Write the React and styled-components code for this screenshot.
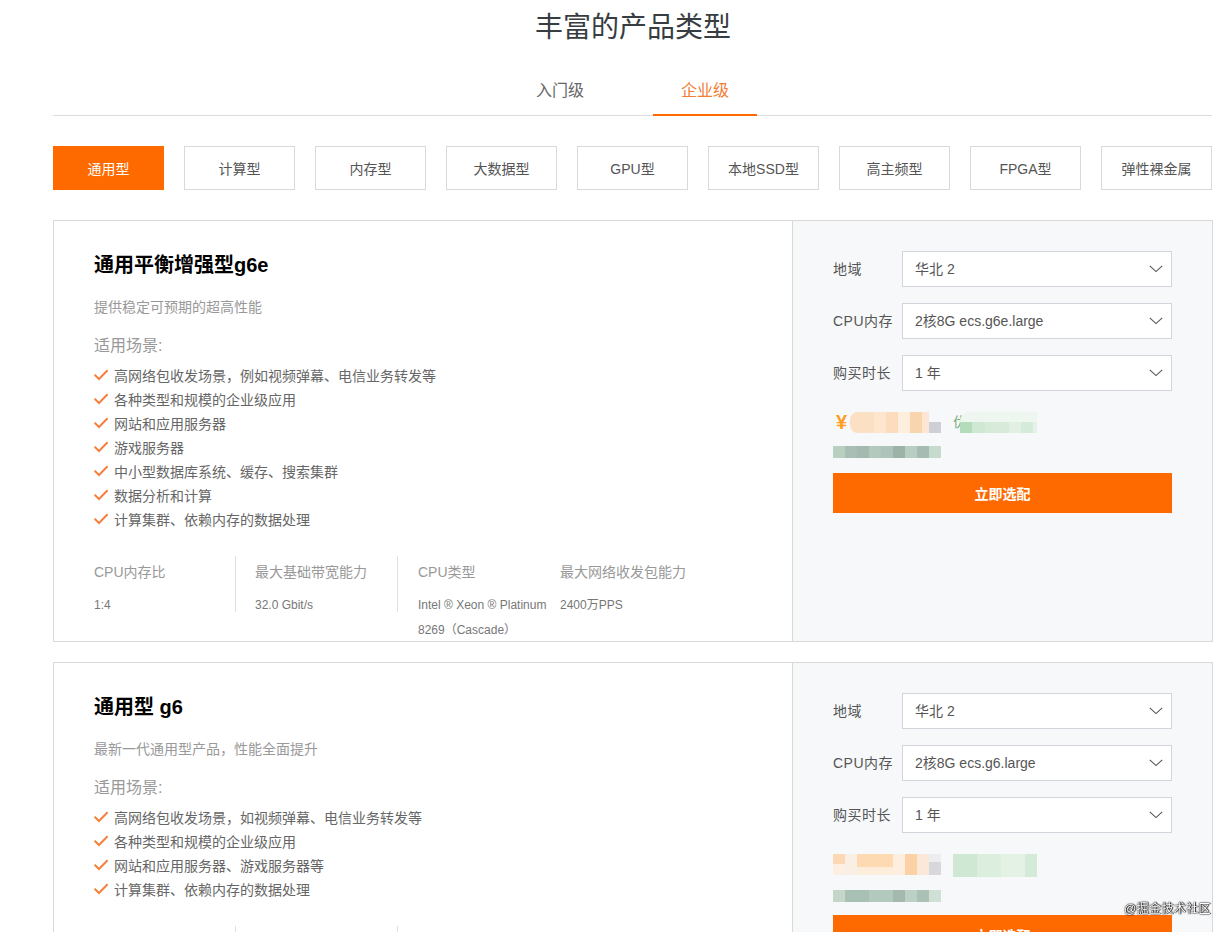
import styled, { createGlobalStyle } from "styled-components";

const GlobalStyle = createGlobalStyle`
  html, body {
    margin: 0;
    padding: 0;
    background: #ffffff;
    font-family: "Liberation Sans", "Noto Sans CJK SC", sans-serif;
    color: #333333;
  }
  html, body, #root {
    height: 932px;
    overflow: hidden;
  }
`;

const Page = styled.div`
  width: 1160px;
  margin-left: 53px;
`;

const Title = styled.h2`
  margin: 0;
  height: 54px;
  line-height: 56px;
  text-align: center;
  font-size: 28px;
  font-weight: 400;
  color: #373d41;
`;

const Tabs = styled.div`
  display: flex;
  justify-content: center;
  gap: 41px;
  height: 62px;
  box-sizing: border-box;
  border-bottom: 1px solid #dcdcdc;
  margin-right: 1px;
`;

const Tab = styled.div`
  width: 104px;
  height: 62px;
  box-sizing: border-box;
  padding-top: 25px;
  text-align: center;
  font-size: 16px;
  line-height: 24px;
  color: ${(p) => (p.$active ? "#f27d35" : "#666666")};
  border-bottom: 2px solid ${(p) => (p.$active ? "#ff6a00" : "transparent")};
`;

const Categories = styled.div`
  display: flex;
  gap: 20px;
  margin-top: 30px;
`;

const Category = styled.div`
  width: 111px;
  height: 44px;
  box-sizing: border-box;
  display: flex;
  align-items: center;
  justify-content: center;
  font-size: 14px;
  color: ${(p) => (p.$active ? "#ffffff" : "#555555")};
  background: ${(p) => (p.$active ? "#ff6a00" : "#ffffff")};
  border: 1px solid ${(p) => (p.$active ? "#ff6a00" : "#d9d9d9")};
`;

const Card = styled.section`
  display: flex;
  height: 422px;
  box-sizing: border-box;
  margin-top: ${(p) => (p.$first ? "30px" : "20px")};
  border: 1px solid #d9d9d9;
`;

const Info = styled.div`
  width: 738px;
  flex: none;
  box-sizing: border-box;
  padding: 30px 40px 0;
`;

const Name = styled.h3`
  margin: 0;
  font-size: 20px;
  line-height: 28px;
  font-weight: 700;
  color: #000000;
`;

const Desc = styled.p`
  margin: 14px 0 0;
  font-size: 14px;
  line-height: 28px;
  color: #999999;
`;

const SceneTitle = styled.div`
  margin-top: 13px;
  font-size: 16px;
  line-height: 24px;
  color: #999999;
`;

const SceneList = styled.ul`
  list-style: none;
  margin: 5px 0 0;
  padding: 0;
`;

const Scene = styled.li`
  display: flex;
  align-items: center;
  gap: 6px;
  height: 24px;
  font-size: 14px;
  color: #666666;
`;

const Stats = styled.div`
  display: grid;
  grid-template-columns: 142px 162px 162px auto;
  margin-top: 25px;
`;

const Stat = styled.div`
  box-sizing: border-box;
  height: 56px;
  padding-left: ${(p) => p.$pad}px;
  border-right: ${(p) => (p.$divider ? "1px solid #e0e0e0" : "none")};
`;

const StatLabel = styled.div`
  font-size: 14px;
  line-height: 32px;
  color: #999999;
`;

const StatValue = styled.div`
  margin-top: 5px;
  font-size: 12px;
  line-height: 24.5px;
  color: #777777;
`;

const Side = styled.aside`
  flex: 1;
  box-sizing: border-box;
  padding: 30px 40px 0;
  background: #f7f8fa;
  border-left: 1px solid #d9d9d9;
`;

const Field = styled.div`
  display: flex;
  align-items: center;
  justify-content: space-between;
  margin-bottom: 16px;
`;

const FieldLabel = styled.label`
  padding-bottom: 2px;
  font-size: 14px;
  letter-spacing: 0.5px;
  color: #555555;
`;

const Select = styled.div`
  display: flex;
  align-items: center;
  justify-content: space-between;
  width: 270px;
  height: 36px;
  box-sizing: border-box;
  padding: 0 8px 2px 12px;
  background: #ffffff;
  border: 1px solid #d4d4dc;
  font-size: 14px;
  color: #555555;
`;

const ChevronIcon = styled.svg`
  margin-top: 2px;
`;

const PriceRow = styled.div`
  display: flex;
  align-items: flex-end;
  height: 21px;
  margin-top: 21px;
`;

const Yen = styled.span`
  width: 17px;
  padding-left: 3px;
  box-sizing: border-box;
  margin-bottom: 1px;
  font-size: 20px;
  line-height: 20px;
  font-weight: 700;
  color: #ff9d1e;
`;

const Mosaic = styled.div`
  display: flex;
  flex: none;
  align-self: ${(p) => (p.$top ? "flex-start" : "auto")};
  margin-left: ${(p) => p.$gap || 0}px;
  padding-top: ${(p) => p.$lift || 0}px;
  background: ${(p) => p.$bg || "none"};
  border-radius: ${(p) => (p.$bg ? "9px 0 0 0" : "0")};
`;

const Cell = styled.span`
  display: block;
  width: ${(p) => p.$w}px;
  height: ${(p) => p.$h}px;
  background: ${(p) => p.$c};
  border-radius: ${(p) => p.$round || "0"};
`;

const GreenLetter = styled.span`
  width: 14px;
  margin-left: 12px;
  margin-bottom: 1px;
  font-size: 14px;
  line-height: 20px;
  color: #6fae7d;
`;

const DiscountRow = styled.div`
  height: ${(p) => 25 - p.$top}px;
  margin-top: ${(p) => p.$top}px;
`;

const SelectButton = styled.button`
  display: block;
  width: 339px;
  height: 40px;
  margin-top: 15px;
  padding: 0;
  border: none;
  background: #ff6a00;
  color: #ffffff;
  font-family: inherit;
  font-size: 14px;
  font-weight: 700;
`;

const Watermark = styled.div`
  position: fixed;
  right: 20px;
  top: 900px;
  font-size: 12px;
  line-height: 18px;
  letter-spacing: 0.4px;
  color: #ffffff;
  text-shadow: 0 0 1px #000000, 0 0 2px #000000, 1px 0 1px #333333;
`;

function Check() {
  return (
    <svg width="14" height="14" viewBox="0 0 14 14" fill="none">
      <path d="M0.6 6.6 L5 11 L13.6 2.2" stroke="#f5803e" strokeWidth="2" />
    </svg>
  );
}

function Chevron() {
  return (
    <ChevronIcon width="14" height="8" viewBox="0 0 14 8" fill="none">
      <path d="M0.8 0.8 L7 6.6 L13.2 0.8" stroke="#555555" strokeWidth="1.1" />
    </ChevronIcon>
  );
}

const ROW_A = [
  [12, "#fbe0c4"], [12, "#fde5ce"], [12, "#fbdcbc"], [12, "#fdeedd"], [12, "#f9d5ae"], [7, "#fde6d3"],
];
const ROW_GREEN = [
  [12, "#b4dcba"], [13, "#cfe8d3"], [24, "#d8ebdb"], [12, "#e2f0e4"], [12, "#d6ead9"], [4, "#e6f2e8"],
];
const ROW_GRAY_A = [
  [12, "#b9cfc0"], [12, "#a9bfb5"], [12, "#a4bab0"], [12, "#b3c9be"], [12, "#aec3b9"], [12, "#9db2a9"], [12, "#b9cec3"], [12, "#a6bcb2"], [12, "#c6dacd"],
];
const ROW_GRAY_B = [
  [12, "#c4d5c9"], [24, "#a9c0b4"], [24, "#b4c9be"], [12, "#a4baae"], [12, "#bdd0c5"], [12, "#abc1b5"], [12, "#cfe0d5"],
];
const ROW_B = [
  [12, "linear-gradient(#fcd9b4 50%, #fdf0e2 50%)"],
  [12, "#f9efe4"],
  [36, "linear-gradient(#fddab2 60%, #fdeedc 60%)"],
  [12, "#fdeee0"],
  [12, "#fad2a6"],
  [12, "#fce8d8"],
];
const ROW_B_GREEN = [
  [24, "#cfe8d3"], [24, "#dcefdf"], [24, "#e4f2e6"], [12, "#d5ebd9"],
];

function Cells({ cells, height }) {
  return cells.map(([w, c], i) => <Cell key={i} $w={w} $h={height} $c={c} />);
}

const PRODUCTS = [
  {
    name: "通用平衡增强型g6e",
    desc: "提供稳定可预期的超高性能",
    spec: "2核8G ecs.g6e.large",
    scenes: [
      "高网络包收发场景，例如视频弹幕、电信业务转发等",
      "各种类型和规模的企业级应用",
      "网站和应用服务器",
      "游戏服务器",
      "中小型数据库系统、缓存、搜索集群",
      "数据分析和计算",
      "计算集群、依赖内存的数据处理",
    ],
    stats: ["1:4", "32.0 Gbit/s", "Intel ® Xeon ® Platinum 8269（Cascade）", "2400万PPS"],
    price: (
      <PriceRow>
        <Yen>¥</Yen>
        <Mosaic>
          <Cell $w={12} $h={21} $c="#fbe0c4" $round="8px 0 0 8px" />
          <Cells cells={ROW_A} height={21} />
        </Mosaic>
        <Mosaic>
          <Cell $w={12} $h={11} $c="#cfcfd6" />
        </Mosaic>
        <GreenLetter>优</GreenLetter>
        <Mosaic $gap={-7} $lift={10} $bg="#eef6f0">
          <Cells cells={ROW_GREEN} height={11} />
        </Mosaic>
      </PriceRow>
    ),
    discount: <Mosaic><Cells cells={ROW_GRAY_A} height={12} /></Mosaic>,
    discountTop: 13,
  },
  {
    name: "通用型 g6",
    desc: "最新一代通用型产品，性能全面提升",
    spec: "2核8G ecs.g6.large",
    scenes: [
      "高网络包收发场景，如视频弹幕、电信业务转发等",
      "各种类型和规模的企业级应用",
      "网站和应用服务器、游戏服务器等",
      "计算集群、依赖内存的数据处理",
    ],
    price: (
      <PriceRow>
        <Mosaic><Cells cells={ROW_B} height={21} /></Mosaic>
        <Mosaic>
          <Cell $w={12} $h={21} $c="linear-gradient(#ededf0 40%, #d8d8dc 40%)" />
        </Mosaic>
        <Mosaic $gap={12} $top><Cells cells={ROW_B_GREEN} height={23} /></Mosaic>
      </PriceRow>
    ),
    discount: <Mosaic><Cells cells={ROW_GRAY_B} height={12} /></Mosaic>,
    discountTop: 15,
  },
];

// the second card is cut by the window before its labels show, only the dividers are seen
const STAT_LABELS = ["CPU内存比", "最大基础带宽能力", "CPU类型", "最大网络收发包能力"];
const STAT_PADS = [0, 19, 20, 0];
const CATEGORIES = ["通用型", "计算型", "内存型", "大数据型", "GPU型", "本地SSD型", "高主频型", "FPGA型", "弹性裸金属"];

function Product({ item, first }) {
  return (
    <Card $first={first}>
      <Info>
        <Name>{item.name}</Name>
        <Desc>{item.desc}</Desc>
        <SceneTitle>适用场景:</SceneTitle>
        <SceneList>
          {item.scenes.map((s) => (
            <Scene key={s}>
              <Check />
              {s}
            </Scene>
          ))}
        </SceneList>
        <Stats>
          {STAT_LABELS.map((label, i) => (
            <Stat key={label} $pad={STAT_PADS[i]} $divider={i < 2}>
              {item.stats && (
                <>
                  <StatLabel>{label}</StatLabel>
                  <StatValue>{item.stats[i]}</StatValue>
                </>
              )}
            </Stat>
          ))}
        </Stats>
      </Info>
      <Side>
        <Field>
          <FieldLabel>地域</FieldLabel>
          <Select>华北 2<Chevron /></Select>
        </Field>
        <Field>
          <FieldLabel>CPU内存</FieldLabel>
          <Select>{item.spec}<Chevron /></Select>
        </Field>
        <Field>
          <FieldLabel>购买时长</FieldLabel>
          <Select>1 年<Chevron /></Select>
        </Field>
        {item.price}
        <DiscountRow $top={item.discountTop}>{item.discount}</DiscountRow>
        <SelectButton>立即选配</SelectButton>
      </Side>
    </Card>
  );
}

export default function App() {
  return (
    <>
      <GlobalStyle />
      <Page>
        <Title>丰富的产品类型</Title>
        <Tabs>
          <Tab>入门级</Tab>
          <Tab $active>企业级</Tab>
        </Tabs>
        <Categories>
          {CATEGORIES.map((c, i) => (
            <Category key={c} $active={i === 0}>{c}</Category>
          ))}
        </Categories>
        {PRODUCTS.map((p, i) => (
          <Product key={p.name} item={p} first={i === 0} />
        ))}
      </Page>
      <Watermark>@掘金技术社区</Watermark>
    </>
  );
}
